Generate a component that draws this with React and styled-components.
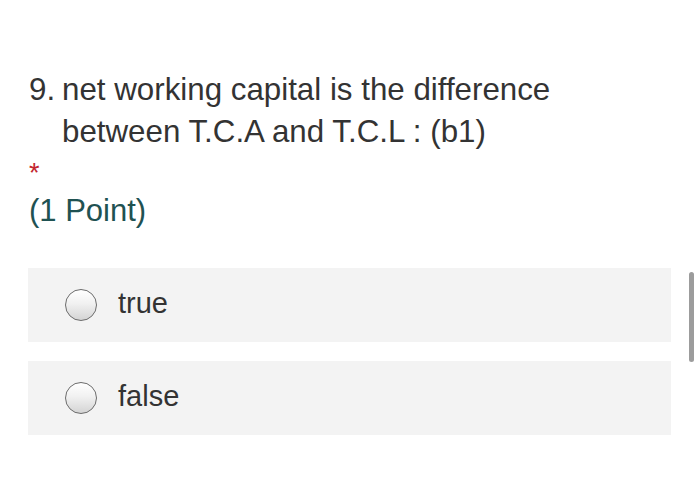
import React from "react";
import styled, { createGlobalStyle } from "styled-components";

const Global = createGlobalStyle`
  html, body { margin: 0; padding: 0; background: #ffffff; }
  body { font-family: "Liberation Sans", Arial, Helvetica, sans-serif; }
`;

const Page = styled.div`
  position: relative;
  width: 700px;
  height: 487px;
  box-sizing: border-box;
  padding: 69px 29px 0 28px;
  background: #fff;
  overflow: hidden;
`;

const Title = styled.div`
  display: grid;
  grid-template-columns: 33px 1fr;
  font-size: 31.3px;
  line-height: 42px;
  color: #333333;
  padding-left: 1px;
`;

const Number = styled.span``;
const TitleText = styled.span``;

const Required = styled.div`
  margin-top: 8px;
  padding-left: 1px;
  font-size: 27px;
  line-height: 24px;
  color: #c3262e;
`;

const Points = styled.div`
  margin-top: 8px;
  padding-left: 1px;
  font-size: 31px;
  line-height: 36px;
  color: #1f5252;
`;

const Options = styled.div`
  margin-top: 39px;
  display: flex;
  flex-direction: column;
  gap: 19px;
  width: 643px;
`;

const Option = styled.label`
  display: flex;
  align-items: center;
  height: 74px;
  box-sizing: border-box;
  padding-left: 37px;
  background: #f3f3f3;
`;

const Radio = styled.span`
  width: 32px;
  height: 32px;
  box-sizing: border-box;
  border-radius: 50%;
  border: 1.6px solid #6c6c6c;
  background: linear-gradient(180deg, #ffffff 0%, #f1f1f1 45%, #d4d4d4 100%);
  flex: none;
`;

const Label = styled.span`
  margin-left: 21px;
  margin-bottom: 3px;
  font-size: 29px;
  line-height: 29px;
  color: #333333;
`;

const Scrollbar = styled.div`
  position: absolute;
  left: 689px;
  top: 272px;
  width: 5px;
  height: 90px;
  border-radius: 3px;
  background: #9c9c9c;
`;

export default function App() {
  return (
    <>
      <Global />
      <Page>
        <Title>
          <Number>9.</Number>
          <TitleText>
            net working capital is the difference between T.C.A and T.C.L : (b1)
          </TitleText>
        </Title>
        <Required>*</Required>
        <Points>(1 Point)</Points>
        <Options>
          {["true", "false"].map((o) => (
            <Option key={o}>
              <Radio />
              <Label>{o}</Label>
            </Option>
          ))}
        </Options>
        <Scrollbar />
      </Page>
    </>
  );
}
